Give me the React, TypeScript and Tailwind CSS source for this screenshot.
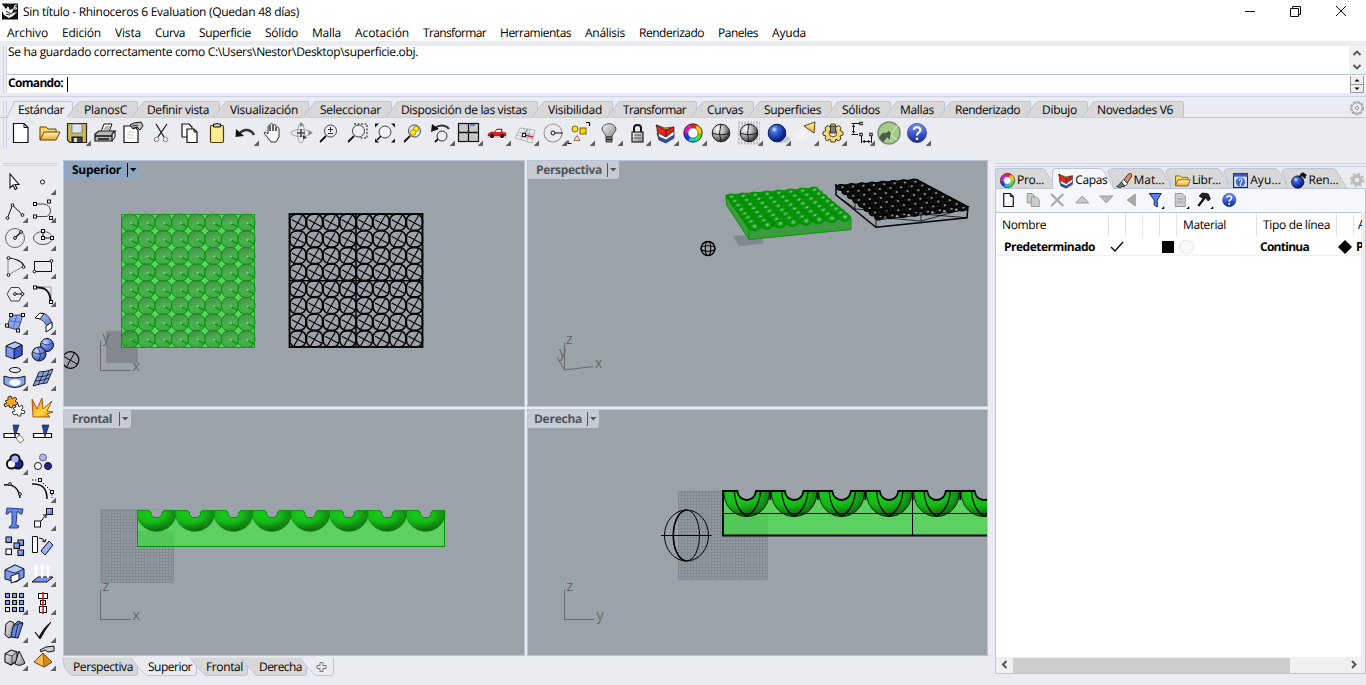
import { useLayoutEffect, useRef, useState, type ReactNode } from "react";

const FONT = "font-['Open_Sans','Noto_Sans',sans-serif]";

/* Single-line label whose tracking is adjusted so that it takes exactly `w` pixels. */
function Label({ children, w, className = "" }: { children: string; w: number; className?: string }) {
  const ref = useRef<HTMLSpanElement>(null);
  const [spacing, setSpacing] = useState(0);
  useLayoutEffect(() => {
    const el = ref.current;
    if (!el) return;
    setSpacing((w - el.getBoundingClientRect().width) / children.length);
  }, [w, children]);
  return (
    <span
      ref={ref}
      className={`inline-block whitespace-pre [text-rendering:geometricPrecision] ${className}`}
      style={{ letterSpacing: `${spacing}px` }}
    >
      {children}
    </span>
  );
}

function Defs() {
  return (
    <svg className="absolute h-0 w-0" aria-hidden="true">
      <defs>
        <linearGradient id="blue" x1="0" y1="0" x2="1" y2="1">
          <stop offset="0" stopColor="#b4c8ff" />
          <stop offset="1" stopColor="#5472e0" />
        </linearGradient>
        <radialGradient id="blueBall" cx="0.35" cy="0.3" r="0.75">
          <stop offset="0" stopColor="#d2deff" />
          <stop offset="0.4" stopColor="#7d98f0" />
          <stop offset="1" stopColor="#3050c0" />
        </radialGradient>
        <radialGradient id="deepBall" cx="0.35" cy="0.3" r="0.75">
          <stop offset="0" stopColor="#e6eeff" />
          <stop offset="0.25" stopColor="#3b6be0" />
          <stop offset="0.8" stopColor="#0a2490" />
          <stop offset="1" stopColor="#061a6a" />
        </radialGradient>
        <radialGradient id="grayBall" cx="0.32" cy="0.28" r="0.8">
          <stop offset="0" stopColor="#ffffff" />
          <stop offset="0.45" stopColor="#b4b4b4" />
          <stop offset="1" stopColor="#202020" />
        </radialGradient>
        <linearGradient id="help" x1="0" y1="0" x2="0" y2="1">
          <stop offset="0" stopColor="#7d95f2" />
          <stop offset="0.55" stopColor="#3a58d0" />
          <stop offset="1" stopColor="#14287c" />
        </linearGradient>
        <linearGradient id="gold" x1="0" y1="0" x2="0" y2="1">
          <stop offset="0" stopColor="#fff3b8" />
          <stop offset="1" stopColor="#f0ac28" />
        </linearGradient>
        <linearGradient id="orange" x1="0" y1="0" x2="1" y2="1">
          <stop offset="0" stopColor="#f08010" />
          <stop offset="0.6" stopColor="#ffd83a" />
          <stop offset="1" stopColor="#f07810" />
        </linearGradient>
        <linearGradient id="gray" x1="0" y1="0" x2="1" y2="1">
          <stop offset="0" stopColor="#f4f4f4" />
          <stop offset="1" stopColor="#8a8a8a" />
        </linearGradient>
        <linearGradient id="cup" x1="0.35" y1="0" x2="0.65" y2="1">
          <stop offset="0" stopColor="#4c9050" />
          <stop offset="0.5" stopColor="#48b04c" />
          <stop offset="1" stopColor="#44a848" />
        </linearGradient>
        <radialGradient id="bump" cx="0.45" cy="0.42" r="0.6">
          <stop offset="0" stopColor="#8ade8a" />
          <stop offset="0.4" stopColor="#2aa42c" />
          <stop offset="0.8" stopColor="#029204" />
        </radialGradient>
        <radialGradient id="bowl" cx="0.36" cy="0.2" r="0.75">
          <stop offset="0" stopColor="#18d018" />
          <stop offset="0.5" stopColor="#16b818" />
          <stop offset="1" stopColor="#126a12" />
        </radialGradient>
        <pattern id="mesh" width="3" height="3" patternUnits="userSpaceOnUse">
          <rect width="3" height="3" fill="#939aa2" />
          <path d="M0 .5H3M.5 0V3" stroke="#82888f" strokeWidth="0.9" />
        </pattern>
      </defs>
    </svg>
  );
}

type IconProps = { children?: ReactNode; menu?: boolean };

function Cell({ children, menu }: IconProps) {
  return (
    <svg viewBox="-14 -14 28 28" className="h-7 w-7 shrink-0" fill="none" stroke="#111" strokeWidth="1">
      {children}
      {menu && <path d="M14 7.5V13H8.5Z" fill="#606060" stroke="none" />}
    </svg>
  );
}

const Wheel = () => (
  <g>
    <g strokeWidth="4.4">
      <path d="M-3.5-6.1A7 7 0 0 1 3.5-6.1" stroke="#f02020" />
      <path d="M3.5-6.1A7 7 0 0 1 7 0" stroke="#f8d010" />
      <path d="M7 0A7 7 0 0 1 3.5 6.1" stroke="#50e020" />
      <path d="M3.5 6.1A7 7 0 0 1-3.5 6.1" stroke="#10c8c8" />
      <path d="M-3.5 6.1A7 7 0 0 1-7 0" stroke="#2038f0" />
      <path d="M-7 0A7 7 0 0 1-3.5-6.1" stroke="#e818d0" />
    </g>
    <circle r="9.2" stroke="#222" strokeWidth="0.9" />
    <circle r="5" fill="#fff" stroke="#444" strokeWidth="0.6" />
  </g>
);

const Help = () => (
  <g>
    <circle r="9.5" fill="url(#help)" stroke="#20349a" strokeWidth="0.8" />
    <path d="M-3.2-3C-3-6.6 3.6-6.6 3.4-2.8C3.3-.6 0-.4 0 2.6" stroke="#fff" strokeWidth="2.1" />
    <circle cy="5.8" r="1.4" fill="#fff" stroke="none" />
  </g>
);

const LayersMark = () => (
  <g strokeWidth="0.6">
    <path d="M-8 0L-6 7L1 10L9 5V1L0 4Z" fill="#2b50c8" />
    <path d="M-8-3L-6 4L1 7L9 2V-2L0 1Z" fill="#fff" />
    <path d="M-9-8L-7 0L1 4V-3Z" fill="#f02818" />
    <path d="M-9-8L1-3L9-6L0-5Z" fill="#ffa050" />
    <path d="M1-3L9-6V-2L1 4Z" fill="#d82418" />
  </g>
);

const Lens = ({ children }: { children?: ReactNode }) => (
  <g>
    <circle cx="1.5" cy="-2" r="6" fill="#eef1f4" stroke="#444" />
    <path d="M-3 3L-9 9" strokeWidth="1.8" />
    {children}
  </g>
);

const GlobeGray = () => (
  <g>
    <circle r="8.8" fill="url(#grayBall)" stroke="#222" />
    <path d="M-9 0Q0 3.4 9 0M0-9Q-3 0 0 9" strokeWidth="0.9" />
  </g>
);

const Node = ({ x, y, s = 1.5 }: { x: number; y: number; s?: number }) => (
  <rect x={x - s} y={y - s} width={s * 2} height={s * 2} fill="#fff" stroke="#111" />
);

const Dot = ({ x, y }: { x: number; y: number }) => <circle cx={x} cy={y} r="1.4" fill="#fff" stroke="#111" />;

function MainToolbar() {
  return (
    <div className="flex h-[32px] pl-[7px] pt-px">
      <Cell><path d="M-7.5-9.5H3L7-5.5V9.5H-7.5Z" fill="#fff" strokeWidth="1.2" /><path d="M3-9.5V-5.5H7" /></Cell>
      <Cell><path d="M-9 7V-6H-3L-1-4H7V0" fill="#ffd860" stroke="#5a4208" /><path d="M-9 7L-5-1H11L7 7Z" fill="url(#gold)" stroke="#5a4208" /></Cell>
      <Cell menu>
        <path d="M-9.5-9.5H9.5V9.5H-7L-9.5 7Z" fill="#c8b860" stroke="#2a2710" strokeWidth="1.2" />
        <rect x="-5" y="-9" width="10" height="9" fill="#dfe3ea" stroke="#555" strokeWidth="0.6" />
        <rect x="-5" y="4" width="10" height="5.5" fill="#444" /><rect x="-3" y="5" width="3" height="4" fill="#ddd" stroke="none" />
      </Cell>
      <Cell>
        <path d="M-4-1L-1-9H7L4-1Z" fill="#fff" /><path d="M0-6H5M-1-4H4" strokeWidth="0.6" />
        <path d="M-10 1L-6-2H10L7 1V8H-10Z" fill="#b8b8b8" strokeWidth="1.2" /><path d="M7 8L10 4V-2" />
        <path d="M-10 3H7M-7 6H4" strokeWidth="1.6" />
      </Cell>
      <Cell><path d="M-9-7H1L5-3V9.5H-9Z" fill="#fff" strokeWidth="1.2" /><path d="M-3-8L1-10L8-11L10-7L7-3L4-6L0-4Z" fill="#c0c0c0" /><path d="M-1-7L5-8M0-5L5-6" strokeWidth="0.8" /><path d="M-6-1H1M-6 2H1M-6 5H1" stroke="#ccc" /></Cell>
      <Cell>
        <path d="M-5-9L3 4M6-9L-3 4" stroke="#111" strokeWidth="1.2" />
        <circle cx="-4.5" cy="6.5" r="2.3" stroke="#888" /><circle cx="4.5" cy="6.5" r="2.3" stroke="#888" />
      </Cell>
      <Cell>
        <path d="M-7-9H0L3-6V4H-7Z" fill="#fff" strokeWidth="1.2" /><path d="M-2-4H5L8-1V9.5H-2Z" fill="#fff" strokeWidth="1.2" />
        <path d="M5-4V-1H8" />
      </Cell>
      <Cell>
        <rect x="-6.5" y="-7.5" width="13" height="17" rx="1.5" fill="#ffec90" stroke="#4a3a08" strokeWidth="1.2" />
        <path d="M-3.5-6V-9H-1L0-10L1-9H3.5V-6Z" fill="#ccc" />
      </Cell>
      <Cell menu><path d="M-6 1C-1-5 6-4 9 2" strokeWidth="2.4" stroke="#333" /><path d="M-9.5 4L-9-4L-1 3Z" fill="#111" stroke="none" /></Cell>
      <Cell>
        <path d="M-5 5L-9 0C-8-2-6 0-5 1V-6C-5-8-3-8-3-6V-2V-8C-3-10 0-10 0-8V-2V-7C0-9 3-9 3-7V-2V-5C4-7 6-6 6-4V4L3 9H-2Z" fill="#f8f8f8" stroke="#333" />
      </Cell>
      <Cell>
        <ellipse rx="10" ry="3.5" stroke="#a5a5a5" /><ellipse rx="3.5" ry="10" stroke="#a5a5a5" />
        <path d="M-4 0H4M0-4V4" strokeWidth="1.6" stroke="#444" /><path d="M8-3L12 0L7 2ZM-1-11L3-8L-1-6Z" fill="#888" stroke="none" />
        <path d="M2 2L6 5L2 6Z" fill="#333" stroke="none" />
      </Cell>
      <Cell><Lens><path d="M-1-3.5H4M1.5-6V-1M-1 .5H4" stroke="#333" /></Lens></Cell>
      <Cell><path d="M-3-9H10V5H3" strokeDasharray="2 1.5" /><Lens /></Cell>
      <Cell>
        <circle cy="-1" r="6" fill="#eef1f4" stroke="#444" /><path d="M-4 3L-8 7" strokeWidth="1.6" />
        <path d="M-10-9.5H-6L-10-5.5ZM10-9.5V-5.5L6-9.5ZM10 9.5H6L10 5.5ZM-10 9.5V5.5L-6 9.5Z" fill="#111" stroke="none" />
      </Cell>
      <Cell><Lens><circle cx="3" cy="-4" r="2.8" fill="#ffe818" stroke="#86740a" strokeWidth="0.7" /><circle cx="0" cy="-.5" r="2.8" fill="#ffe818" stroke="#86740a" strokeWidth="0.7" /></Lens></Cell>
      <Cell menu>
        <path d="M-6-5C-1-9 5-8 8-4" strokeWidth="2" stroke="#333" /><path d="M-10-1L-9-9L-2-4Z" fill="#111" stroke="none" />
        <circle cx="1" cy="3" r="5" fill="#eef1f4" stroke="#333" /><path d="M-3 6L-6 9" strokeWidth="1.8" />
      </Cell>
      <Cell menu>
        <rect x="-10.5" y="-9.5" width="20" height="18" fill="#c8c8c8" stroke="#111" strokeWidth="1.2" />
        <path d="M-.5-9.5V8.5M-10-.5H10" strokeWidth="1.3" /><path d="M1-8H6" stroke="#2040c0" />
      </Cell>
      <Cell menu>
        <path d="M-9 1L-6-1L-3-1L0-4L5-4V-1L9 0V3H-9Z" fill="#e81c1c" stroke="#7a0808" strokeWidth="0.5" />
        <path d="M0-3H4V-1H-2Z" fill="#fff" stroke="none" /><path d="M-10 4.5H10" stroke="#ccc" />
        <circle cx="-5" cy="3" r="1.6" fill="#222" /><circle cx="5" cy="3" r="1.6" fill="#222" />
      </Cell>
      <Cell menu>
        <path d="M-5-5L10-3L7 10L-10 5ZM0-4.5L-4 7M5-4L2 8.5M-7-1L9 1.5M-9 2L8 6" stroke="#b0b0b0" strokeWidth="0.9" />
        <path d="M-1 2L3-4" stroke="#28a030" /><path d="M0 2L8 4" stroke="#d02020" strokeWidth="1.3" /><Node x={-1} y={2} s={1.6} />
      </Cell>
      <Cell menu>
        <circle r="9" stroke="#999" strokeWidth="1.1" /><circle r="2" /><path d="M2 0H10" />
      </Cell>
      <Cell menu>
        <circle cx="-6" cy="-4" r="3" fill="#ffe030" stroke="#7a6208" /><rect x="-1" y="-5" width="6" height="6" fill="#ffd010" stroke="#7a6208" />
        <path d="M-4 2.5L-7 7.5H-1Z" stroke="#a06840" /><path d="M5-10.5H8.5V-7M-13 7.5V10.5H-9.5" strokeWidth="1.2" />
      </Cell>
      <Cell menu>
        <path d="M-3 4C-3 1-7-1-7-4C-6-11 6-11 7-4C7-1 3 1 3 4Z" fill="url(#gray)" stroke="#555" />
        <path d="M-3 4H3V9H-3Z" fill="#888" strokeWidth="0.8" /><path d="M-3 6.5H3" />
      </Cell>
      <Cell menu><path d="M-3-1V-5C-3-9 4-9 4-5V-1" strokeWidth="2" /><rect x="-5" y="-1" width="11" height="10" fill="url(#gray)" stroke="#222" strokeWidth="1.2" /><path d="M-3 2H4M-3 5H4" stroke="#555" /></Cell>
      <Cell menu><LayersMark /></Cell>
      <Cell menu><Wheel /></Cell>
      <Cell><GlobeGray /></Cell>
      <Cell menu>
        <path d="M-11-10H11M-11-6H11M-11-2H11M-11 2H11M-11 6H11M-11 10H11" stroke="#c4c4c6" strokeDasharray="2 1" strokeWidth="3" />
        <GlobeGray />
      </Cell>
      <Cell menu><ellipse cx="4" cy="6" rx="9" ry="4" fill="#c4c8d2" stroke="none" /><circle r="8.8" fill="url(#deepBall)" stroke="#0a1850" /></Cell>
      <Cell menu>
        <path d="M-12 2L-1-6L5 3L-7 9Z" fill="#f4f2f1" stroke="none" />
        <path d="M-1-7L10-11L9 0Z" fill="url(#gold)" stroke="#604010" />
      </Cell>
      <Cell menu>
        <path d="M-2-9H2L3-6L6-7.5L8-5L7-2.5L10-1V2L7 3L8 6L5 8L3 6L2 9H-2L-3 6L-6 8L-8 5L-7 3L-10 2V-1L-7-2.5L-8-5L-6-7.5L-3-6Z" fill="#f4d880" stroke="#4a3a10" />
        <circle r="3.8" fill="#ebecf1" stroke="#604a10" /><rect x="-2.5" y="-7" width="5" height="7" fill="#808080" strokeWidth="0.7" />
      </Cell>
      <Cell menu>
        <path d="M-9.5-9.5H-1M-9.5 1.5H-3M-7.5-8V0M.5 10V3M10.5 10V3M2 8.5H9" />
        <path d="M-7.5-9L-9-6H-6ZM-7.5 1L-9-2H-6ZM1 8.5L4 7V10ZM10 8.5L7 7V10Z" fill="#111" stroke="none" />
        <Node x={0} y={-9.5} s={1.2} /><Node x={0} y={1.5} s={1.2} /><Node x={10} y={1.5} s={1.2} />
      </Cell>
      <Cell>
        <circle r="11" fill="#a4cc88" stroke="#7a8a72" strokeWidth="1.4" />
        <path d="M-10 5C-8 0-6-1-3 0L0-2L2 0L1 3V7L-2 4L-4 7L-6 9Z" fill="#4c5a48" stroke="none" /><path d="M2 1L9-8M2 2L8 7" stroke="#dff0d0" />
      </Cell>
      <Cell menu><Help /></Cell>
    </div>
  );
}

const Cube = () => (
  <g strokeWidth="0.9">
    <path d="M-8-4L1-8L8-5V5L0 9L-8 6Z" fill="#7896f4" />
    <path d="M-8-4L1-8L8-5L0-1Z" fill="#b4c8ff" />
    <path d="M0-1L8-5V5L0 9Z" fill="#3a58c8" />
  </g>
);

const sq = (x: number, y: number, fill = "url(#blue)") => (
  <rect key={`${x},${y}`} x={x} y={y} width="5.5" height="5.5" fill={fill} stroke="#111" strokeWidth="1.1" />
);

function SideToolbar() {
  return (
    <div className="grid w-14 grid-cols-2">
      <Cell><path d="M-4-8V6L-1 3L1 7.5L3 6.5L1 2.5H5Z" fill="#fff" strokeWidth="1.1" /></Cell>
      <Cell menu><circle cx="0.5" cy="0" r="2" fill="#fff" /></Cell>
      <Cell menu><path d="M-6.5 8L-1.5-5L8.5 5" /><Dot x={-6.5} y={8} /><Dot x={-1.5} y={-5} /><Dot x={8.5} y={5} /></Cell>
      <Cell menu><path d="M-7-6L2-6C11-5 10 7 3 6.5L-7 6.5" stroke="#444" /><Node x={-7} y={-6} /><Node x={7} y={-8.5} /><Node x={-7} y={6.5} /><Node x={9} y={8} /></Cell>
      <Cell menu><circle cx="1" r="9.5" stroke="#666" /><path d="M1 0L7-6" strokeWidth="1.3" /><Dot x={1} y={0} /><Dot x={7} y={-6} /></Cell>
      <Cell menu><ellipse cx="1" rx="9.5" ry="6.5" stroke="#555" /><path d="M1 0H10M1 0V-7" /><Node x={1} y={0} /><Node x={1} y={-7} /><Node x={10} y={0} /></Cell>
      <Cell menu><path d="M-6 9V-8M-6 9L10 0" stroke="#888" /><path d="M-6-8Q7-7 10 0" strokeWidth="1.2" /><Dot x={-5.5} y={-8} /><Dot x={-5.5} y={9} /><Dot x={9.5} y={1} /></Cell>
      <Cell menu><rect x="-7.5" y="-4.5" width="17" height="10" /><Dot x={9.5} y={-5} /><Dot x={-7.5} y={5.5} /></Cell>
      <Cell menu><path d="M-7 0L-3-6.5H5L9 0L5 7H-3Z" stroke="#444" /><path d="M1 0H9" /><Dot x={1} y={0} /><Dot x={8.5} y={0} /></Cell>
      <Cell menu><path d="M-5-7H9V6" stroke="#999" /><path d="M-5-6.5Q8-7 8.5 7" strokeWidth="1.9" /><Node x={-7} y={-6.5} /><Node x={9} y={8} /></Cell>
      <Cell menu><path d="M-3-7L9-7L4 8L-7 5Z" fill="#8aa4f4" strokeWidth="0.7" /><path d="M3-7L-1 6M-5-1L7 0" stroke="#3a50b0" strokeWidth="0.7" /><Node x={-3} y={-7} /><Node x={9} y={-7} /><Node x={-7} y={3.5} /><Node x={4} y={8.5} /></Cell>
      <Cell menu><path d="M-5-4L0-9C6-8 10-2 10 4L5 5C4 1 0-3-5-4Z" fill="url(#blue)" strokeWidth="0.8" /><path d="M-7-4L-2-9L2-8L-2-3Z" fill="#fff" /><path d="M4 4L10 0V6L4 10Z" fill="#fff" /></Cell>
      <Cell menu><Cube /></Cell>
      <Cell menu><circle cx="5" cy="-5" r="6.5" fill="url(#blueBall)" /><circle cx="-3" cy="4" r="7" fill="url(#blueBall)" /><path d="M-9 2Q-3 6 3 2M-4-2Q0 4-3 10M0-7Q5-3 10-7" strokeWidth="0.7" /></Cell>
      <Cell menu><ellipse cx="1" cy="-8" rx="5.5" ry="2.5" /><path d="M-10-2Q1 2 11-2V6Q1 13-10 6Z" fill="#8aa4f4" /><ellipse cx="1" cy="4.5" rx="5.5" ry="3" fill="#fff" stroke="#dfe8ff" /></Cell>
      <Cell menu><path d="M-3-6Q4-6 11-9L5 5Q0 5-9 8Z" fill="#8aa3f0" strokeWidth="0.9" /><path d="M2-6L-4 7M7-7L1 6M-5-1Q2-1 9-4M-7 3Q0 3 7 0" strokeWidth="0.8" /></Cell>
      <Cell>
        <path d="M-9-5L-6-6L-6-9L-3-10L-2-7L1-9L3-7L1-5L4-3L2 0L-1-1L-2 2L-5 1L-5-1L-9 1L-10-2L-7-3Z" fill="#f8a820" strokeWidth="0.8" />
        <path d="M-1 2L2 1L1-1L4-2L5 1L8-1L9 2L7 4L11 5L10 8L7 7L7 10L4 10L3 8L0 9L-2 6L1 5Z" fill="#fff" strokeWidth="0.8" />
      </Cell>
      <Cell><path d="M-10-7L-5 3L0-8L1 3L10-5L5 5L11 6L5 8L8 11H-9Z" fill="url(#orange)" stroke="#8a3a08" strokeWidth="0.8" /></Cell>
      <Cell><path d="M-10-.5H5V3.5H-10Z" fill="#fff" strokeWidth="1.2" /><path d="M2 4L6 1L10 6L6 9Z" fill="#fff" stroke="#777" /><path d="M-1-9H5L1 3Z" fill="#2444a8" strokeWidth="0.6" /></Cell>
      <Cell><path d="M-8.5-.5H9.5V3.5H-8.5Z" fill="#fff" strokeWidth="1.2" /><path d="M0-9H7L3 3Z" fill="#2444a8" strokeWidth="0.6" /></Cell>
      <Cell menu><g strokeWidth="2.6"><circle cx="1" cy="-3" r="4.3" fill="#a8b4ff" /><circle cx="-2.5" cy="2" r="4.3" fill="#fff" /><circle cx="4" cy="2" r="4.3" fill="#20288c" /></g><circle cx="4" cy="2" r="3.6" fill="#20288c" stroke="none" /><circle cx="-2.5" cy="2" r="3.6" fill="#fff" stroke="none" /><circle cx="1" cy="-3" r="3.6" fill="#a8b4ff" stroke="none" /></Cell>
      <Cell><circle cx="1" cy="-4.5" r="3.5" fill="#a8b4ff" stroke="#666" /><circle cx="-4" cy="4" r="3.5" fill="#fff" /><circle cx="6" cy="4" r="3.5" fill="#20288c" /></Cell>
      <Cell><path d="M-10-5Q4-7 6 8" strokeWidth="1.6" /><Dot x={-4} y={-6} /><Dot x={6} y={4} /></Cell>
      <Cell menu><path d="M-10-6Q5-7 5 9" strokeWidth="1.6" /><path d="M-10-10H-2L10 2V8" strokeDasharray="1.5 1.5" /><Node x={-2} y={-10} /><Node x={10} y={2} /></Cell>
      <Cell><path d="M-7-10L9-9L8-4H6L5-6H3L2 7L5 8L4 10H-5L-4 8L-2 7L-2-6H-5L-6-4H-8Z" fill="#6484ec" stroke="#172a78" strokeWidth="0.9" /></Cell>
      <Cell menu><rect x="-7.5" y="3" width="6" height="6" fill="#fff" /><rect x="4.5" y="-9.5" width="6" height="6" fill="url(#blue)" /><path d="M-1 3L4-3M4-3H1M4-3V0" /></Cell>
      <Cell>{sq(-8, -9)}{sq(4, -6)}{sq(0, -3)}{sq(-8, 3, "#fff")}{sq(4, 4)}</Cell>
      <Cell><path d="M-9.5-9.5H-4.5V6.5H-9.5Z" fill="#fff" /><path d="M-1 5L7-5L11-1L3 9Z" fill="#9cb2ff" /><path d="M-3-8Q2-8 3-4M3-4L0-5M3-4L4-7" /></Cell>
      <Cell menu><path d="M-9-4L1-9L10-5V3L2 8L-9 5Z" fill="#7896f4" /><path d="M-9-4L1-9L10-5L1-1Z" fill="#b4c8ff" strokeWidth="0.8" /><path d="M-3 2L5-1V6L-3 9Z" fill="#fff" /></Cell>
      <Cell menu><path d="M-10 8L-4 3H11L5 8Z" fill="#7893ea" /><path d="M-6 4V-5M0 4V-5M6 4V-5" stroke="#fff" strokeWidth="2" /><path d="M-6-10L-9-5H-3ZM0-10L-3-5H3ZM6-10L3-5H9Z" fill="#fff" stroke="none" /></Cell>
      <Cell menu>{[-8.5, -1.5, 5.5].flatMap((y) => [-8.5, -1.5, 5.5].map((x) => <rect key={`${x},${y}`} x={x} y={y} width="4" height="4" fill={x === -8.5 && y === 5.5 ? "#fff" : "#8fa8f8"} strokeWidth="1.1" />))}</Cell>
      <Cell menu><rect x="-3.5" y="-8.5" width="9" height="5" fill="#fff" /><rect x="-1.5" y="-1.5" width="5" height="4" fill="#fff" /><rect x="-2.5" y="4.5" width="7" height="6" fill="#fff" /><path d="M1-10V12" stroke="#d81818" strokeWidth="1.6" /></Cell>
      <Cell menu><path d="M-8-6L-4-9L0-7V5L-5 8L-9 5Z" fill="url(#gray)" /><path d="M-1-4L4-9L9-7L4 8L-3 7Z" fill="#6484e6" /><path d="M-1-4L4-6L9-7M4-6L1 8" strokeWidth="0.7" /></Cell>
      <Cell menu><path d="M-7 2L-3 7Q2-3 9-8Q2 1-2 9Z" fill="#111" strokeWidth="1" /></Cell>
      <Cell menu><path d="M-9-4L-3-8L3-6V3L-3 7L-9 4Z" fill="url(#gray)" strokeWidth="1.1" /><path d="M-9-4L-2-2V6M-2-2L3-6" strokeWidth="0.7" /><path d="M5-7L11 5Q6 9 1 6Z" fill="url(#gray)" /></Cell>
      <Cell menu><path d="M-8 4L1-5L10 4L2 9Z" fill="#f8bc50" stroke="#70400a" /><path d="M1-5L2 9L10 4Z" fill="#d88a20" stroke="#70400a" strokeWidth="0.7" /><path d="M-2-8L4-11L12-12V-7L6-6L3-8L-1-6Z" fill="#ccc" /></Cell>
    </div>
  );
}

const toolbarTabs: [string, number, number][] = [
  ["Estándar", 66, 46], ["PlanosC", 65, 43], ["Definir vista", 82, 62], ["Visualización", 89, 68],
  ["Seleccionar", 83, 61], ["Disposición de las vistas", 146, 126], ["Visibilidad", 75, 54], ["Transformar", 84, 63],
  ["Curvas", 57, 36], ["Superficies", 78, 57], ["Sólidos", 59, 38], ["Mallas", 54, 34],
  ["Renderizado", 86, 65], ["Dibujo", 57, 35], ["Novedades V6", 96, 76],
];

function ToolbarTabs() {
  return (
    <div className="flex h-[17px] border-b border-[#bcc4dc] pl-[7px]">
      {toolbarTabs.map(([name, w, textW], i) => (
        <div key={name} className={`relative flex h-[17px] shrink-0 justify-end ${i ? "pr-[11px]" : "pr-[9px]"}`} style={{ width: w }}>
          <svg className="absolute inset-0 overflow-visible" width={w} height="17">
            <path
              d={`M${i ? -6 : 0} 16.5L${i ? 5 : 7} 1.5Q6 .5 8 .5H${w - 2}Q${w - .5} .5 ${w - .5} 2V16.5`}
              fill={i ? "#d8d8d9" : "#ebecf1"} stroke="#bcc4dc"
            />
            {i === 0 && <path d={`M1 16.5H${w - 1}`} stroke="#ebecf1" />}
          </svg>
          <Label w={textW} className="relative leading-[17px]">{name}</Label>
        </div>
      ))}
    </div>
  );
}

function Gear({ className }: { className: string }) {
  return (
    <svg viewBox="-8 -8 16 16" className={className} fill="none" stroke="#9a9a9a">
      <circle r="6.3" strokeWidth="1.3" strokeDasharray="3 1.1" /><circle r="5.2" strokeWidth="0.8" /><circle r="1.5" />
    </svg>
  );
}

type TitleProps = { title: string; w: number; active?: boolean; pad: string; gap: string };

function ViewTitle({ title, w, active, pad, gap }: TitleProps) {
  return (
    <div className={`absolute left-0 top-0 flex h-[18px] rounded-br-[3px] text-[12px] font-bold ${pad} ${active ? "bg-[#8fa6c2] text-black" : "bg-[#c6cbd3] text-[#505459]"}`}>
      <Label w={w} className="leading-[17px]">{title}</Label>
      <svg width="18" height="18" className={gap}>
        <path d="M6.5 2V16" stroke="currentColor" /><path d="M9 7H15.5L12.2 10.5Z" fill="currentColor" />
      </svg>
    </div>
  );
}

function Pane({ viewBox, children, ...title }: TitleProps & { viewBox: string; children: ReactNode }) {
  return (
    <div className="relative overflow-hidden border border-[#bcc4d8] bg-[#9ca2aa]">
      <svg viewBox={viewBox} className="block h-full w-full" fill="none" preserveAspectRatio="xMinYMin slice">{children}</svg>
      <ViewTitle {...title} />
    </div>
  );
}

function Axes({ x, y, h, v }: { x: number; y: number; h: string; v: string }) {
  return (
    <g>
      <path d={`M${x} ${y - 30}V${y}H${x + 30}`} stroke="#66686b" />
      <g fill="#66686b" fontSize="14">
        <text x={x + 2} y={y - 29}>{v}</text><text x={x + 32} y={y + 0.5}>{h}</text>
      </g>
    </g>
  );
}

const eight = [0, 1, 2, 3, 4, 5, 6, 7];

function TopScene() {
  const s = 16.65;
  return (
    <>
      <rect x="106" y="331" width="32" height="32" fill="#83878e" />
      {[111.5, 122.5, 133.5].map((x) => [336.5, 346.5, 357.5].map((y) => <circle key={`${x},${y}`} cx={x} cy={y} r=".6" fill="#a4a8ae" />))}
      <rect x="121.5" y="214.5" width="133" height="133" fill="#58d65c" />
      {eight.map((r) => eight.map((c) => {
        const x = 130 + c * s, y = 222.6 + r * s;
        return (
          <g key={`${r},${c}`}>
            <rect x={x - 8.3} y={y - 8.3} width="16.6" height="16.6" rx="6.8" fill="url(#cup)" stroke="#08900c" strokeWidth="1" />
            <path d={`M${x + 1} ${y + 1}L${x + 7.5} ${y + 4.5}`} stroke="#068a0a" strokeWidth="1.1" />
            <circle cx={x + 1} cy={y + .5} r="1" fill="#84dc84" />
          </g>
        );
      }))}
      <rect x="121.5" y="331" width="16.500" height="16.500" fill="#107010" opacity=".12" />
      <rect x="121.5" y="214.5" width="133" height="133" stroke="#08a008" />
      <rect x="289.5" y="214" width="133" height="133" stroke="#000" strokeWidth="1.8" />
      {eight.map((r) => eight.map((c) => {
        const x = 297.9 + c * s, y = 222.3 + r * s;
        return (
          <g key={`${r},${c}`} stroke="#000">
            <rect x={x - 8} y={y - 8} width="16" height="16" rx="6.2" strokeWidth="1.6" />
            <path d={`M${x - 6} ${y - 2.5}L${x + 7} ${y + 4.5}M${x + 4} ${y - 6.5}L${x - 4} ${y + 7}`} strokeWidth="1.1" />
          </g>
        );
      }))}
      <path d="M356 214V347M289.5 280.7H422.5" stroke="#000" strokeWidth="1.5" />
      <g stroke="#000"><circle cx="70.5" cy="360" r="8.3" strokeWidth="1.3" /><path d="M63 356L77 364M75 352L66 368" /></g>
      <Axes x={100.5} y={370.5} h="x" v="y" />
    </>
  );
}

type P = [number, number];
const blend = (q: [P, P, P, P], u: number, v: number): P => [
  (1 - v) * ((1 - u) * q[0][0] + u * q[1][0]) + v * ((1 - u) * q[3][0] + u * q[2][0]),
  (1 - v) * ((1 - u) * q[0][1] + u * q[1][1]) + v * ((1 - u) * q[3][1] + u * q[2][1]),
];
const greenQuad: [P, P, P, P] = [[731, 197], [814, 190], [844.5, 217], [754, 226.5]];
const blackQuad: [P, P, P, P] = [[841, 187.5], [914, 182], [962, 208], [879, 217]];

function PerspectiveScene() {
  return (
    <>
      <path d="M733 236L760 234.5L764 243.5L739 246.3Z" fill="#83878e" />
      <path d="M726 195L749 229V239.5L726.5 205Z" fill="#3a9c3e" stroke="#08960a" />
      <path d="M749 229L851 218V229.5L749 239.5Z" fill="#3a9c3e" stroke="#08960a" />
      <path d="M726 195L815 188L851 217L749 229Z" fill="#0a940c" stroke="#08960a" />
      {eight.map((r) => eight.map((c) => {
        const [x, y] = blend(greenQuad, c / 7, r / 7);
        return (
          <g key={`${r},${c}`}>
            <ellipse cx={x} cy={y} rx={4.4 + r * .16} ry={3 + r * .18} fill="#06940a" stroke="#048c06" strokeWidth=".8" />
            <ellipse cx={x + 1} cy={y + .3} rx={3.4 + r * .12} ry={2.6 + r * .14} fill="url(#bump)" />
          </g>
        );
      }))}
      <g stroke="#000" strokeWidth="1.2">
        <path d="M836 185.7L917 179.5L968 206.7L876 217Z" fill="#1c1e20" />
        {eight.map((r) => eight.map((c) => {
          const [x, y] = blend(blackQuad, c / 7, r / 7);
          return (
            <g key={`${r},${c}`}>
              <ellipse cx={x} cy={y} rx="4.4" ry="3" fill="#111" />
              <ellipse cx={x + 1.5} cy={y - .2} rx="1.2" ry="1" fill="#868c94" stroke="none" />
            </g>
          );
        }))}
        <path d="M836 184V195L876 227.3L967 217.7L968 206" strokeWidth="1.5" />
        <path d="M876 215V227M855 201V210M836 195L856 209L921 214L967 217.7M876 220L967 210M921 214V221M876 217L921 221L968 208" strokeWidth=".8" />
        <circle cx="708" cy="248.5" r="7" strokeWidth="1.4" />
        <ellipse cx="708" cy="248.5" rx="2.7" ry="7" strokeWidth="1.100" /><ellipse cx="708" cy="248.5" rx="7" ry="2.7" strokeWidth="1.1" />
      </g>
      <path d="M564.5 343V370L557 357M564.5 370L593 366.5" stroke="#66686b" />
      <g fill="#66686b" fontSize="14"><text x="566" y="344">z</text><text x="559" y="357">y</text><text x="595" y="368">x</text></g>
    </>
  );
}

function FrontScene() {
  const s = 38.45;
  return (
    <>
      <rect x="101" y="510" width="72.500" height="72.500" fill="url(#mesh)" stroke="#80868e" strokeWidth=".8" />
      <rect x="137.5" y="510.5" width="307" height="36" fill="#5cd060" stroke="#06960a" />
      <path d="M138 531H174V546H138Z" fill="#38a040" opacity=".18" />
      {eight.map((i) => {
        const x = 156.5 + i * s;
        return (
          <g key={i}>
            <path d={`M${x - 19.2} 510.5V517A20 20 0 0 0 ${x + 19.2} 517V510.5Z`} fill="url(#bowl)" stroke="#0e8c10" strokeWidth=".7" />
            <path d={`M${x + 18} 511Q${x + 16} 524 ${x + 7} 529`} stroke="#0aa00c" strokeWidth=".8" />
            <path d={`M${x - 7.5} 509.5V511.5L${x - 5.5} 512V515L${x - 2.5} 517.5H${x + 2.5}L${x + 5.5} 515V512L${x + 7.5} 511.5V509.5Z`} fill="#9ca2aa" />
            <path d={`M${x - 7.5} 510V511.5L${x - 5.5} 512V515L${x - 2.5} 517.5H${x + 2.5}L${x + 5.5} 515V512L${x + 7.5} 511.5V510`} stroke="#06900a" />
          </g>
        );
      })}
      <Axes x={100.5} y={619.5} h="x" v="z" />
    </>
  );
}

function RightScene() {
  const s = 47.45;
  return (
    <>
      <rect x="678.5" y="491" width="89" height="88.500" fill="url(#mesh)" stroke="#80868e" strokeWidth=".8" />
      <rect x="723" y="491" width="280" height="44.5" fill="#5cd060" />
      <path d="M724 514H768V535H724Z" fill="#38a040" opacity=".18" />
      {eight.slice(0, 6).map((i) => {
        const x = 746.7 + i * s;
        return (
          <g key={i} stroke="#000">
            <path d={`M${x - 23} 491C${x - 22} 525 ${x + 22} 525 ${x + 23} 491Z`} fill="url(#bowl)" strokeWidth=".8" />
            <path d={`M${x + 23.7} 491V500`} strokeWidth="1.6" />
            <path d={`M${x - 12.5} 491Q${x - 11} 510 ${x} 516Q${x + 12} 510 ${x + 14} 491`} strokeWidth="1.2" />
            <path d={`M${x - 9} 488V492C${x - 7} 502 ${x + 7} 502 ${x + 9} 492V488Z`} fill="#9ca2aa" stroke="none" />
            <path d={`M${x - 23.5} 491H${x - 9.3}C${x - 8} 503 ${x + 8} 503 ${x + 9.3} 491H${x + 24}`} strokeWidth="1.8" />
          </g>
        );
      })}
      <g stroke="#000">
        <path d="M723 490V535.5H1000" strokeWidth="1.8" /><path d="M723 513.5H1000M912.5 491V535" />
        <ellipse cx="686.5" cy="535.5" rx="22" ry="25.5" /><ellipse cx="686.5" cy="535.5" rx="13" ry="25.5" />
        <path d="M686 510C669 514 669 557 686 561" strokeWidth="1.5" /><path d="M661 535.5H711.5" />
      </g>
      <Axes x={564.5} y={619.5} h="y" v="z" />
    </>
  );
}

function ViewTabs() {
  const tabs: [string, number, number][] = [["Perspectiva", 75, 60], ["Superior", 59, 44], ["Frontal", 51, 37], ["Derecha", 59, 43], ["", 27, 0]];
  return (
    <div className="flex h-[19px]">
      {tabs.map(([name, w, tw], i) => (
        <div key={i} className="relative flex justify-end pr-[5px]" style={{ width: w }}>
          <svg className="absolute inset-0 overflow-visible" width={w} height="19" fill="none">
            <path d={`M${i ? -7 : 0} .5L${i ? 0 : 1} 10L7 17Q8 18.5 10 18.5H${w - 3}Q${w - .5} 18.5 ${w - .5} 16V.5`} fill={i === 1 || i === 4 ? "#ebecf1" : "#d8d8d9"} stroke="#bcc4dc" />
            {i === 4 && <path d="M13 5.5H16V8.5H19V11.5H16V14.5H13V11.5H10V8.5H13Z" stroke="#777" />}
          </svg>
          {name && <Label w={tw} className="relative leading-[19px]">{name}</Label>}
        </div>
      ))}
    </div>
  );
}

const BlueOrb = () => <><circle cx="-1" cy="2" r="8" fill="url(#deepBall)" /><path d="M1-4L6-9L10-6M3-9L9-3" strokeWidth="2.5" /></>;
const Brush = () => <><path d="M-1-1L6-9Q10-10 9-5L3 4Z" fill="#e08868" /><path d="M-4 2L-1-1L4 4L0 8Z" fill="#fff" /><path d="M-10 8L-4 2L0 7L-6 9Z" fill="#777" /></>;
const FolderIcon = () => <><path d="M-9 7V-6H-3L-1-4H7V-1" fill="#ffd860" stroke="#6a4c08" /><path d="M-9 7L-6-1H10L7 7Z" fill="url(#gold)" stroke="#6a4c08" /></>;
const HelpBox = () => <><rect x="-9" y="-9" width="18" height="18" fill="#d8dfff" stroke="#102878" strokeWidth="1.5" /><rect x="-9" y="-9" width="18" height="4" fill="#3a58c0" stroke="none" /><circle cy="2" r="6" fill="#4668d8" stroke="none" /><path d="M-2 0Q0-4 2 0Q2 1 0 4M0 5V7" stroke="#fff" strokeWidth="1.5" /></>;

function PanelTabs() {
  const tabs: [string, number, ReactNode][] = [
    ["Pro...", 27, <Wheel />], ["Capas", 32, <LayersMark />], ["Mat...", 31, <Brush />],
    ["Libr...", 29, <FolderIcon />], ["Ayu...", 31, <HelpBox />], ["Ren...", 30, <BlueOrb />],
  ];
  return (
    <div className="isolate flex h-[21px]">
      {tabs.map(([name, w, icon], i) => (
        <div key={name} className={`relative flex w-[58.3px] shrink-0 items-center pl-[4px] ${i === 1 ? "z-10" : ""}`}>
          <svg className="absolute inset-0 overflow-visible" width="58" height="21">
            <path
              d={i === 1 ? "M-.5 20.5V3Q-.5 .5 2 .5H46Q49 .5 50 2L61 20.5" : `M.5 20.5V${i ? 14 : 2}${i ? "L-4 5" : ""}Q${i ? -5 : 0} .5 3 .5H46Q49 .5 50 2L61 20.5`}
              fill={i === 1 ? "#f6f7fa" : "#d8d8d9"} stroke="#bcc4dc"
            />
            {i !== 1 && <path d="M0 20.5H59" stroke="#bcc4dc" />}
          </svg>
          <svg viewBox="-11 -11 22 22" className="relative mt-[3px] h-[17px] w-[17px] shrink-0" fill="none" stroke="#111">{icon}</svg>
          <Label w={w} className="relative ml-px mt-[2px] leading-[18px]">{name}</Label>
        </div>
      ))}
      <div className="flex flex-1 items-center justify-end border-b border-[#bcc4dc]">
        <svg viewBox="-8 -8 16 16" className="mr-px mt-[3px] h-4 w-4"><circle r="4" fill="none" stroke="#bdbdbd" strokeWidth="3.5" /><circle r="6.4" fill="none" stroke="#bdbdbd" strokeWidth="1.8" strokeDasharray="2.5 2.5" /></svg>
      </div>
    </div>
  );
}

function PanelIcon({ children, menu }: IconProps) {
  return (
    <svg viewBox="-12 -12 24 24" className="-mt-px h-6 w-[24.5px] shrink-0" fill="none" stroke="#111">
      {children}
      {menu && <path d="M9 6V9H6Z" fill="#111" stroke="none" />}
    </svg>
  );
}

function PanelTools() {
  return (
    <div className="flex h-[23px] bg-[#f6f7fa]">
      <PanelIcon><path d="M-4.5-6.5H2L5-3.5V6.5H-4.5Z" fill="#fff" strokeWidth="1.2" /><path d="M2-6V-3.5H5" /></PanelIcon>
      <PanelIcon><g fill="#ccc" stroke="#999"><path d="M-6-6.5H-1L1-4V3H-6Z" /><path d="M-2-3H3L6 0V6.5H-2Z" /></g></PanelIcon>
      <PanelIcon><path d="M-6-6L6 6M6-6L-6 6" stroke="#aaa" strokeWidth="2.4" /></PanelIcon>
      <PanelIcon><path d="M-6.5 3L0-4L6.5 3Z" fill="#ccc" stroke="#999" /></PanelIcon>
      <PanelIcon><path d="M-6.5-4L0 3L6.5-4Z" fill="#bbb" stroke="#999" /></PanelIcon>
      <PanelIcon><path d="M-4 0L4-6V6Z" fill="#aaa" stroke="#999" /></PanelIcon>
      <PanelIcon menu><path d="M-6-6.5H6L2 0V7L-1 5V0Z" fill="#5a7cec" stroke="#142878" /></PanelIcon>
      <PanelIcon menu><path d="M-5-6.5H2L5-3.5V6.5H-5Z" fill="#ccc" stroke="#999" /><path d="M-3-1H3M-3 2H3" stroke="#999" /></PanelIcon>
      <PanelIcon menu><path d="M-5-4L-2-7L4-6L6-1L4 1L1-3L-2-2Z" fill="#222" /><path d="M1-3L-6 6" strokeWidth="2.2" /></PanelIcon>
      <PanelIcon><g transform="scale(.7)"><Help /></g></PanelIcon>
    </div>
  );
}

function Column({ width, children }: { width: string; children?: ReactNode }) {
  return <div className={`flex h-[23px] shrink-0 items-center border-r border-[#e2e2e4] ${width}`}>{children}</div>;
}

function LayersPanel() {
  return (
    <aside className="flex w-[371px] shrink-0 flex-col">
      <div className="mb-px h-[4px] border-y border-[#cdd3e4]" />
      <PanelTabs />
      <div className="flex h-[485px] flex-col border-x border-b border-[#bcc4d8]">
        <PanelTools />
        <div className="mr-[4px] flex flex-1 flex-col border-t border-[#bcc4d8] bg-white">
          <div className="flex">
            <Column width="w-[113px] pl-[6px]"><Label w={44}>Nombre</Label></Column>
            <Column width="w-[17px]" /><Column width="w-[17px]" /><Column width="w-[17px]" /><Column width="w-[17px]" />
            <Column width="w-[80px] pl-[6px]"><Label w={43}>Material</Label></Column>
            <Column width="w-[80px] pl-[6px]"><Label w={67}>Tipo de línea</Label></Column>
            <Column width="w-[17px]" />
            <span className="w-[8px] shrink-0 overflow-hidden pl-[4px] leading-[23px]">A</span>
          </div>
          <div className="flex h-[20px] items-center border-b border-dotted border-[#e4e4e4] pl-[8px] pt-[3px] font-bold">
            <Label w={91} className="shrink-0 leading-[16px]">Predeterminado</Label>
            <svg width="97" height="16" viewBox="0 1 97 16" className="ml-[15px] shrink-0" fill="none">
              <path d="M1 9L5 13L13 4" stroke="#111" strokeWidth="1.5" /><rect x="52" y="3" width="12" height="12" fill="#000" /><circle cx="76.5" cy="9" r="7" fill="#f8f8f8" stroke="#e5e5e5" />
            </svg>
            <Label w={49} className="ml-[53px] shrink-0 leading-[16px]">Continua</Label>
            <svg width="14" height="14" className="ml-[29px] shrink-0"><path d="M7 0L14 7L7 14L0 7Z" /></svg>
            <span className="ml-[4px] w-[6px] shrink-0 overflow-hidden leading-[16px]">P</span>
          </div>
        </div>
        <div className="mr-[4px] flex h-[16px] items-center bg-[#f0f0f0]">
          <svg width="17" height="16" fill="none"><path d="M10.5 4L7 7.5L10.5 11" stroke="#555" strokeWidth="2" /></svg>
          <div className="h-[15px] w-[277px] bg-[#cdcdcd]" />
          <svg width="17" height="16" fill="none" className="ml-auto"><path d="M8 4L11.5 7.5L8 11" stroke="#555" strokeWidth="2" /></svg>
        </div>
      </div>
    </aside>
  );
}

const menus: [string, number][] = [
  ["Archivo", 41], ["Edición", 39], ["Vista", 26], ["Curva", 30], ["Superficie", 52], ["Sólido", 33], ["Malla", 29],
  ["Acotación", 54], ["Transformar", 63], ["Herramientas", 71], ["Análisis", 40], ["Renderizado", 65], ["Paneles", 40], ["Ayuda", 34],
];

export default function App() {
  return (
    <div className={`flex h-[685px] w-[1366px] flex-col overflow-hidden bg-[#ebecf1] text-[12px] leading-[16px] text-black ${FONT}`}>
      <Defs />
      <header className="h-[41px] bg-white">
        <div className="flex h-[23px] items-center pl-[2px]">
          <svg width="17" height="17" viewBox="0 0 17 17" className="-mt-px">
            <rect width="16" height="16" y=".5" fill="#111" />
            <path d="M0 1L4 6L6 3L8 7L12 5L10 10L15 9L11 13L7 15L2 12L0 8Z" fill="#f4f4f4" /><path d="M4 8L9 11L12 9M4 11L8 12" stroke="#222" fill="none" />
            <path d="M15 2Q12 1.5 12 5Q12.5 7 14.5 6Q15 4 12.5 4" stroke="#fff" fill="none" />
          </svg>
          <Label w={276} className="ml-[4px]">Sin título - Rhinoceros 6 Evaluation (Quedan 48 días)</Label>
          <svg width="110" height="20" className="-mt-[2px] ml-auto mr-[12px]" fill="none" stroke="#111">
            <path d="M1 10.5H11M92 5L102 15M102 5L92 15" /><path d="M46.5 7.5H54.5V15.5H46.5ZM48.5 7.5V5.5H56.5V13.5H54.5" />
          </svg>
        </div>
        <nav className="flex h-[18px] items-center gap-[14px] pl-[7px] pt-[2px]">
          {menus.map(([m, w]) => <Label key={m} w={w}>{m}</Label>)}
        </nav>
      </header>

      <section className="mt-[5px] flex h-[47px] shrink-0 pl-[3px]">
        <div className="w-[4px] border-x border-[#cdd3e4] bg-[#ebecf1]" />
        <div className="flex flex-1 flex-col bg-white">
          <div className="flex h-[29px] border-b border-[#b9c5d8]">
            <Label w={410} className="-mt-[2px] ml-px h-4">{"Se ha guardado correctamente como C:\\Users\\Nestor\\Desktop\\superficie.obj."}</Label>
            <svg width="17" height="28" className="ml-auto bg-[#f0f0f0]" fill="none"><path d="M4.5 9L8 5.5L11.5 9M4.5 19L8 22.5L11.5 19" stroke="#555" strokeWidth="1.8" /></svg>
          </div>
          <div className="flex h-[18px] items-center">
            <Label w={55} className="-mt-[2px] ml-px font-bold">Comando:</Label>
            <div className="ml-[4px] h-[15px] w-px bg-black" />
            <svg width="15" height="17" className="ml-auto mr-[1px] bg-[#eee]" fill="none">
              <path d="M.5 0V16.5H13.5V0M.5 8.5H13.5" stroke="#999" /><path d="M4.5 5.5L7 3L9.5 5.5ZM4.5 11.5L7 14L9.5 11.5Z" fill="#000" />
            </svg>
          </div>
        </div>
      </section>

      <section className="mt-[3px] flex h-[56px] shrink-0 border-t border-[#cdd3e4] pt-[4px]">
        <div className="relative flex-1">
          <div className="absolute left-[3px] top-0 h-[48px] w-[4px] border-x border-[#cdd3e4]" />
          <ToolbarTabs />
          <MainToolbar />
          <Gear className="absolute -top-px right-[1px] h-4 w-4" />
        </div>
      </section>

      <main className="mt-[8px] flex flex-1">
        <div className="w-[63px] shrink-0 pt-[3px]">
          <div className="mb-[2px] ml-[3px] h-[3px] w-[54px] border-y border-[#cdd3e4]" />
          <SideToolbar />
        </div>
        <div className="flex w-[925px] shrink-0 flex-col">
          <div className="grid h-[496px] grid-cols-[462px_461px] grid-rows-[247px_247px] gap-[2px]">
            <Pane title="Superior" w={49} active pad="pl-[8px]" gap="ml-0" viewBox="64 161 460 245"><TopScene /></Pane>
            <Pane title="Perspectiva" w={66} pad="pl-[8px]" gap="-ml-px" viewBox="528 161 459 245"><PerspectiveScene /></Pane>
            <Pane title="Frontal" w={40} pad="pl-[8px]" gap="ml-px" viewBox="64 410 460 245"><FrontScene /></Pane>
            <Pane title="Derecha" w={48} pad="pl-[6px]" gap="-ml-px" viewBox="528 410 459 245"><RightScene /></Pane>
          </div>
          <div className="mt-px"><ViewTabs /></div>
        </div>
        <div className="ml-[7px] flex pt-[3px]"><LayersPanel /></div>
      </main>
    </div>
  );
}
